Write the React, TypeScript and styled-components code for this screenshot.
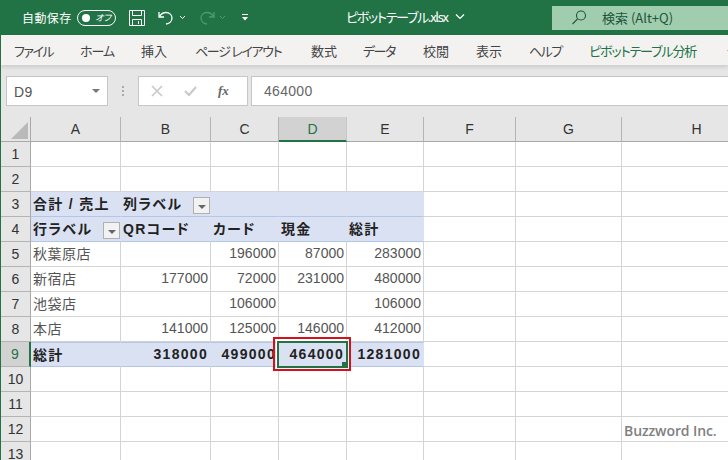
import React from "react";
import styled, { createGlobalStyle } from "styled-components";

const GlobalStyle = createGlobalStyle`
  html, body { margin: 0; padding: 0; background: #fff; }
  body { width: 728px; height: 460px; overflow: hidden; }
`;

const FONT = `"Liberation Sans", "Noto Sans CJK JP", sans-serif`;
const UI_FONT = `"Noto Sans CJK JP", "Noto Sans", sans-serif`;

const Window = styled.div`
  position: relative;
  width: 728px;
  height: 460px;
  overflow: hidden;
  display: flex;
  flex-direction: column;
  background: #e6e6e6;
  border-left: 1px solid #217346;
  box-sizing: border-box;
  font-family: ${UI_FONT};
  font-feature-settings: "palt";
`;

const TitleBar = styled.div`
  height: 35px;
  flex: none;
  background: #217346;
  color: #fff;
  display: flex;
  align-items: center;
  margin-left: -1px;
`;

const AutoSave = styled.span`
  font-size: 12px;
  margin-left: 22px;
  width: 55px;
  letter-spacing: 0.4px;
`;

const Toggle = styled.div`
  height: 14px;
  width: 29px;
  border: 1px solid #fff;
  border-radius: 8px;
  display: flex;
  align-items: center;
  justify-content: space-between;
  padding: 0 4px;
  margin-right: 13px;
  font-size: 9px;
  font-style: italic;
`;

const Knob = styled.i`
  width: 8px;
  height: 8px;
  border-radius: 50%;
  background: #fff;
`;

const QuickIcon = styled.svg<{ $gap?: number }>`
  flex: none;
  display: block;
  margin-right: ${(p) => p.$gap ?? 0}px;
`;

const FileName = styled.div`
  position: absolute;
  left: 345px;
  top: 8px;
  display: flex;
  align-items: center;
  gap: 7px;
  font-size: 13px;
  line-height: 18px;
  letter-spacing: -1.3px;
`;

const SearchBox = styled.div`
  position: absolute;
  left: 551px;
  top: 6px;
  width: 176px;
  height: 24px;
  padding: 0 0 2px 20px;
  box-sizing: border-box;
  background: #9fcdae;
  color: #22543a;
  display: flex;
  align-items: center;
  font-size: 13px;
`;

const TabBar = styled.div`
  height: 30px;
  flex: none;
  background: #f3f2f1;
  display: flex;
  align-items: center;
  padding-left: 13px;
  box-sizing: border-box;
  box-shadow: 0 2px 4px rgba(0, 0, 0, 0.12);
  white-space: nowrap;
  position: relative;
  z-index: 1;
`;

const Tab = styled.span<{ $w: number; $ls?: number; $active?: boolean }>`
  flex: none;
  width: ${(p) => p.$w}px;
  font-size: 13px;
  letter-spacing: ${(p) => p.$ls ?? 0}px;
  color: ${(p) => (p.$active ? "#217346" : "#444")};
`;

const FormulaRow = styled.div`
  height: 52px;
  flex: none;
  display: flex;
  align-items: flex-start;
  padding: 11px 0 0 5px;
  box-sizing: border-box;
`;

const NameBox = styled.div`
  width: 102px;
  height: 30px;
  box-sizing: border-box;
  background: #fff;
  border: 1px solid #c6c6c6;
  display: flex;
  align-items: center;
  justify-content: space-between;
  padding: 2px 7px 0 7px;
  font: 14px ${FONT};
  letter-spacing: 0.4px;
  color: #555;
`;

const Caret = styled.i`
  width: 0;
  height: 0;
  margin-top: -3px;
  border-left: 4px solid transparent;
  border-right: 4px solid transparent;
  border-top: 4px solid #777;
`;

const Grip = styled.div`
  width: 30px;
  display: flex;
  flex-direction: column;
  align-items: center;
  gap: 2px;
  padding-top: 10px;
  i {
    width: 2px;
    height: 2px;
    background: #aaa;
  }
`;

const FxBox = styled.div`
  width: 110px;
  height: 30px;
  box-sizing: border-box;
  background: #fff;
  border: 1px solid #c6c6c6;
  display: flex;
  align-items: center;
  padding-left: 12px;
  gap: 21px;
`;

const FxLabel = styled.span`
  font: italic bold 13px "Liberation Serif", serif;
  color: #666;
`;

const FormulaInput = styled.div`
  flex: 1;
  height: 30px;
  margin-left: 3px;
  box-sizing: border-box;
  background: #fff;
  border: 1px solid #c6c6c6;
  border-right: none;
  padding-left: 12px;
  display: flex;
  align-items: center;
  font: 14px ${FONT};
  letter-spacing: 0.3px;
  color: #666;
`;

const Sheet = styled.div`
  flex: 1;
  display: grid;
  grid-template-columns: 30px 90px 90px 68px 68px 77px 92px 106px 150px;
  grid-template-rows: 25px repeat(13, 25px);
  background: #fff;
`;

const Corner = styled.div`
  background: #e6e6e6;
  border-right: 1px solid #a9a9a9;
  border-bottom: 1px solid #a9a9a9;
  position: relative;
  &::after {
    content: "";
    position: absolute;
    right: 2px;
    bottom: 2px;
    border-style: solid;
    border-width: 0 0 17px 17px;
    border-color: transparent transparent #b9b9b9 transparent;
  }
`;

const ColHead = styled.div<{ $selected?: boolean }>`
  box-sizing: border-box;
  background: ${(p) => (p.$selected ? "#d2d2d2" : "#e6e6e6")};
  color: ${(p) => (p.$selected ? "#217346" : "#333")};
  border-right: 1px solid ${(p) => (p.$selected ? "#c6c6c6" : "#b4b4b4")};
  border-bottom: ${(p) => (p.$selected ? "2px solid #217346" : "1px solid #a9a9a9")};
  font: 14px ${FONT};
  display: flex;
  align-items: center;
  justify-content: center;
`;

const RowHead = styled.div<{ $selected?: boolean }>`
  box-sizing: border-box;
  background: ${(p) => (p.$selected ? "#d2d2d2" : "#e6e6e6")};
  color: ${(p) => (p.$selected ? "#217346" : "#333")};
  border-right: ${(p) => (p.$selected ? "2px solid #217346" : "1px solid #a9a9a9")};
  border-bottom: 1px solid #b4b4b4;
  font: 14px ${FONT};
  display: flex;
  align-items: center;
  justify-content: center;
`;

const Cell = styled.div<{ $right?: boolean; $bold?: boolean; $fill?: boolean; $topLine?: boolean }>`
  position: relative;
  box-sizing: border-box;
  display: flex;
  align-items: center;
  justify-content: ${(p) => (p.$right ? "flex-end" : "flex-start")};
  padding: 0 2px 2px 2px;
  font-family: ${FONT};
  font-size: 14px;
  font-weight: ${(p) => (p.$bold ? 700 : 400)};
  letter-spacing: ${(p) => (p.$bold ? "1.3px" : p.$right ? "0" : "0.5px")};
  color: ${(p) => (p.$bold ? "#222" : "#555")};
  white-space: nowrap;
  background: ${(p) => (p.$fill ? "#d9e1f2" : "#fff")};
  border-right: 1px solid ${(p) => (p.$fill ? "transparent" : "#d4d4d4")};
  border-bottom: 1px solid ${(p) => (p.$fill ? "#b4c6e7" : "#d4d4d4")};
  border-top: ${(p) => (p.$topLine ? "1px solid #b4c6e7" : "none")};
`;

const FilterButton = styled.span`
  position: absolute;
  right: 0;
  bottom: 2px;
  width: 17px;
  height: 17px;
  box-sizing: border-box;
  background: #f2f2f2;
  border: 1px solid #b0b0b0;
  display: flex;
  align-items: center;
  justify-content: center;
  &::after {
    content: "";
    margin-top: 3px;
    border-left: 4px solid transparent;
    border-right: 4px solid transparent;
    border-top: 4px solid #666;
  }
`;

const Highlight = styled.div`
  position: absolute;
  left: -6px;
  top: -6px;
  right: -5px;
  bottom: -5px;
  border: 2px solid #d6101b;
  pointer-events: none;
  z-index: 3;
`;

const ActiveBorder = styled.div`
  position: absolute;
  left: -2px;
  top: -2px;
  right: -2px;
  bottom: -2px;
  border: 2px solid #217346;
  outline: 1px solid #fff;
  pointer-events: none;
  z-index: 2;
  &::after {
    content: "";
    position: absolute;
    right: -2px;
    bottom: -2px;
    width: 6px;
    height: 6px;
    background: #217346;
  }
`;

const Watermark = styled.div`
  position: absolute;
  left: 623px;
  top: 421px;
  z-index: 4;
  font: 600 14px "Open Sans", sans-serif;
  letter-spacing: -0.1px;
  color: #7f7f7f;
`;

const tabs: [string, number, number][] = [
  ["ファイル", 66, -1.5],
  ["ホーム", 61, -1],
  ["挿入", 54, 0],
  ["ページ レイアウト", 116, -1.3],
  ["数式", 52, 0],
  ["データ", 60, -1.5],
  ["校閲", 53, 0],
  ["表示", 53, 0],
  ["ヘルプ", 60, -1.5],
];

const columns = ["A", "B", "C", "D", "E", "F", "G", "H"];

type Row = { cells: string[]; fill?: boolean; bold?: boolean };

const rows: Row[] = [
  { cells: ["", "", "", "", ""] },
  { cells: ["", "", "", "", ""] },
  { cells: ["合計 / 売上", "列ラベル", "", "", ""], fill: true, bold: true },
  { cells: ["行ラベル", "QRコード", "カード", "現金", "総計"], fill: true, bold: true },
  { cells: ["秋葉原店", "", "196000", "87000", "283000"] },
  { cells: ["新宿店", "177000", "72000", "231000", "480000"] },
  { cells: ["池袋店", "", "106000", "", "106000"] },
  { cells: ["本店", "141000", "125000", "146000", "412000"] },
  { cells: ["総計", "318000", "499000", "464000", "1281000"], fill: true, bold: true },
  { cells: ["", "", "", "", ""] },
  { cells: ["", "", "", "", ""] },
  { cells: ["", "", "", "", ""] },
  { cells: ["", "", "", "", ""] },
];

function SheetRow({ row, index }: { row: Row; index: number }) {
  const n = index + 1;
  return (
    <>
      <RowHead $selected={n === 9}>{n}</RowHead>
      {row.cells.map((text, c) => {
        const active = n === 9 && c === 3;
        return (
          <Cell key={c} $right={/^\d+$/.test(text)} $bold={row.bold} $fill={row.fill} $topLine={n === 9}>
            {text}
            {n === 3 && c === 1 && <FilterButton />}
            {n === 4 && c === 0 && <FilterButton />}
            {active && <ActiveBorder />}
            {active && <Highlight />}
          </Cell>
        );
      })}
      <Cell />
      <Cell />
      <Cell />
    </>
  );
}

export default function App() {
  return (
    <>
      <GlobalStyle />
      <Window>
        <TitleBar>
          <AutoSave>自動保存</AutoSave>
          <Toggle>
            <Knob />
            <span>オフ</span>
          </Toggle>
          <QuickIcon width="16" height="16" viewBox="0 0 16 16" fill="none" stroke="#fff" $gap={13}>
            <path d="M.5.5h15v15H.5zM3.5.5v5h9v-5M3.5 15.5v-6h9v6M9.5 11v3" />
          </QuickIcon>
          <QuickIcon width="16" height="16" viewBox="0 0 16 16" fill="none" stroke="#fff" strokeWidth="1.3" $gap={5}>
            <path d="M1 2v5h5M1.500 6.500C3 4 5 2.500 8 2.500c3.500 0 6 2.500 6 5.500s-2.500 5.500-6 6" />
          </QuickIcon>
          <QuickIcon width="7" height="5" viewBox="0 0 7 5" fill="none" stroke="#fff" $gap={13}>
            <path d="M1 1l2.500 2.500L6 1" />
          </QuickIcon>
          <QuickIcon width="16" height="16" viewBox="0 0 16 16" fill="none" stroke="#4f9a72" strokeWidth="1.3" $gap={4}>
            <path d="M15 2v5h-5M14.500 6.500C13 4 11 2.500 8 2.500c-3.500 0-6 2.500-6 5.500s2.500 5.500 6 6" />
          </QuickIcon>
          <QuickIcon width="7" height="5" viewBox="0 0 7 5" fill="none" stroke="#4f9a72" $gap={15}>
            <path d="M1 1l2.500 2.500L6 1" />
          </QuickIcon>
          <QuickIcon width="8" height="7" viewBox="0 0 8 7" fill="#fff">
            <path d="M1 0h6v1H1zM1 3h6L4 6.500z" />
          </QuickIcon>
          <FileName>
            ピボットテーブル.xlsx
            <QuickIcon width="10" height="6" viewBox="0 0 10 6" fill="none" stroke="#fff" strokeWidth="1.2">
              <path d="M1 .5l4 4 4-4" />
            </QuickIcon>
          </FileName>
          <SearchBox>
            <QuickIcon width="15" height="15" viewBox="0 0 15 15" fill="none" stroke="#22543a" strokeWidth="1.1" $gap={15}>
              <circle cx="9" cy="5.500" r="4.500" />
              <path d="M5.500 9l-5 5" />
            </QuickIcon>
            検索 (Alt+Q)
          </SearchBox>
        </TitleBar>
        <TabBar>
          {tabs.map(([label, w, ls]) => (
            <Tab key={label} $w={w} $ls={ls}>
              {label}
            </Tab>
          ))}
          <Tab $w={138} $ls={-1.1} $active>
            ピボットテーブル分析
          </Tab>
          <Tab $w={20} $active>
            デザイン
          </Tab>
        </TabBar>
        <FormulaRow>
          <NameBox>
            D9
            <Caret />
          </NameBox>
          <Grip>
            <i />
            <i />
            <i />
          </Grip>
          <FxBox>
            <QuickIcon width="12" height="12" viewBox="0 0 12 12" fill="none" stroke="#c8c8c8" strokeWidth="1.6">
              <path d="M1 1l10 10M11 1L1 11" />
            </QuickIcon>
            <QuickIcon width="13" height="12" viewBox="0 0 13 12" fill="none" stroke="#c8c8c8" strokeWidth="2">
              <path d="M1 6l4 4 7-8" />
            </QuickIcon>
            <FxLabel>fx</FxLabel>
          </FxBox>
          <FormulaInput>464000</FormulaInput>
        </FormulaRow>
        <Sheet>
          <Corner />
          {columns.map((c) => (
            <ColHead key={c} $selected={c === "D"}>
              {c}
            </ColHead>
          ))}
          {rows.map((row, i) => (
            <SheetRow key={i} row={row} index={i} />
          ))}
        </Sheet>
        <Watermark>Buzzword Inc.</Watermark>
      </Window>
    </>
  );
}
